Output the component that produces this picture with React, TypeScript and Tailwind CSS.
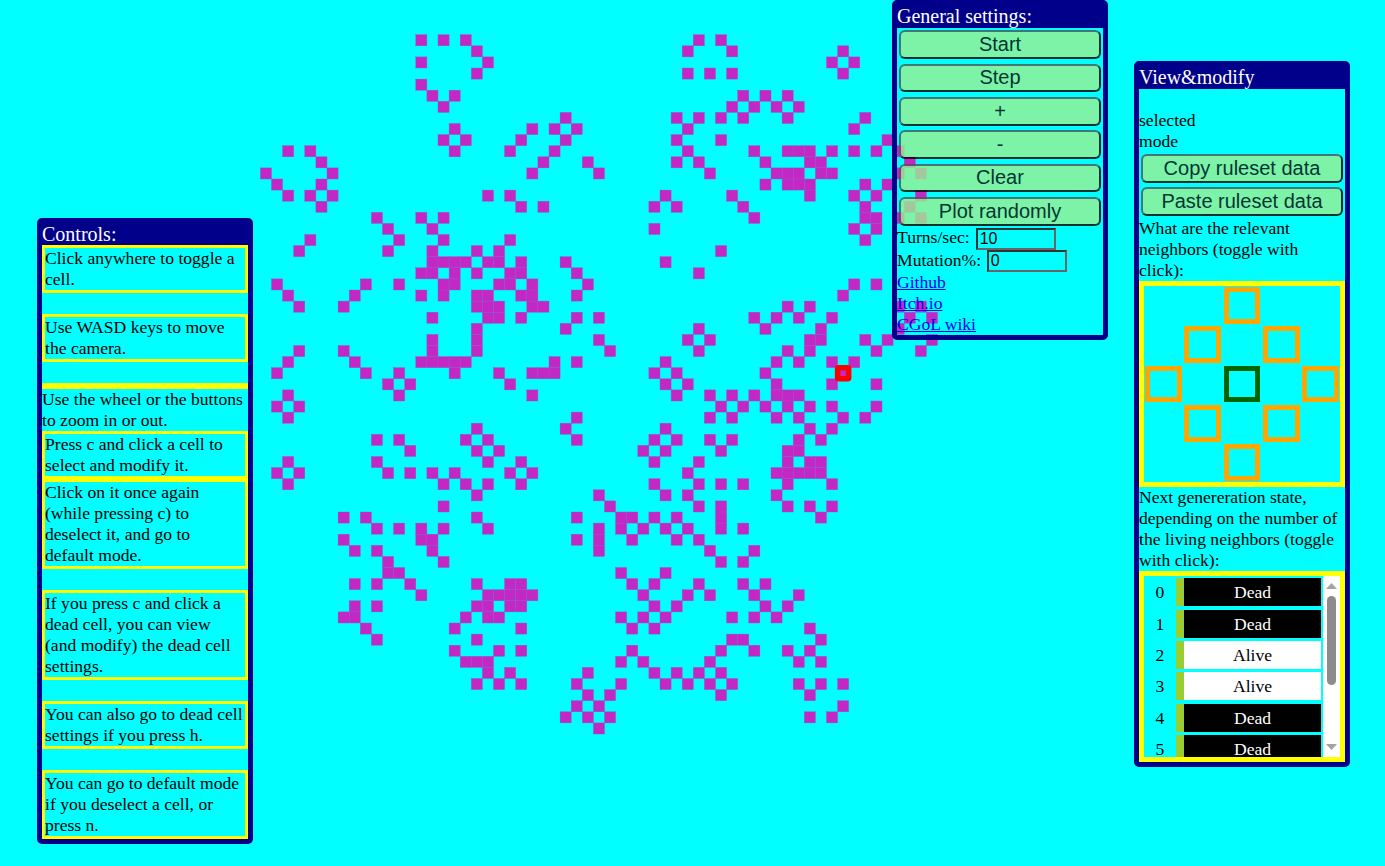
// Game of life page: canvas of cells with three floating panels
const CELL_ROWS: [number, number[]][] = [
  [0, [14, 16, 18, 39, 41]],
  [1, [19, 38, 42, 52]],
  [2, [14, 20, 51, 53]],
  [3, [19, 38, 40, 42, 52]],
  [4, [14]],
  [5, [15, 17, 43, 45, 47]],
  [6, [16, 42, 44, 46, 48]],
  [7, [27, 37, 39, 41, 43, 47, 54]],
  [8, [17, 24, 26, 28, 38, 53]],
  [9, [16, 18, 23, 27, 37, 41, 56]],
  [10, [2, 4, 17, 22, 26, 38, 44, 47, 48, 49, 51, 53, 55, 57]],
  [11, [5, 25, 29, 37, 39, 45, 49, 50, 58]],
  [12, [0, 6, 24, 30, 40, 46, 47, 48, 50, 51, 57, 59]],
  [13, [1, 5, 45, 47, 48, 49, 54, 56]],
  [14, [2, 4, 6, 20, 22, 36, 42, 49, 53, 55, 59]],
  [15, [5, 23, 25, 35, 37, 43, 54, 58]],
  [16, [10, 14, 16, 44, 54, 55, 57, 59]],
  [17, [11, 15, 35, 53, 55]],
  [18, [4, 12, 16, 22, 54]],
  [19, [3, 11, 15, 19, 21, 41]],
  [20, [15, 16, 17, 18, 20, 21, 23, 27, 36]],
  [21, [14, 15, 17, 19, 22, 23, 28, 39]],
  [22, [1, 9, 12, 16, 17, 21, 22, 24, 29, 53, 55]],
  [23, [2, 8, 14, 16, 19, 20, 23, 24, 28, 52]],
  [24, [3, 7, 19, 20, 21, 24, 25, 47, 49, 57, 59]],
  [25, [15, 20, 21, 23, 28, 30, 44, 46, 48, 51, 58, 60]],
  [26, [19, 27, 39, 45, 50, 57]],
  [27, [15, 19, 30, 38, 40, 49, 50, 54, 56, 60]],
  [28, [3, 7, 15, 19, 31, 39, 47, 49, 55, 59]],
  [29, [2, 8, 14, 15, 16, 17, 18, 26, 28, 36, 46, 48, 51, 53]],
  [30, [1, 9, 12, 17, 21, 24, 25, 26, 35, 37, 45]],
  [31, [11, 13, 22, 36, 38, 46, 51, 55]],
  [32, [2, 12, 24, 37, 40, 42, 44, 46, 47, 48]],
  [33, [1, 3, 41, 43, 45, 47, 49, 51, 55]],
  [34, [2, 28, 40, 42, 46, 48, 52, 54]],
  [35, [19, 27, 36, 49, 51]],
  [36, [10, 12, 18, 20, 28, 35, 37, 40, 42, 48, 50]],
  [37, [13, 19, 21, 34, 36, 41, 47, 48]],
  [38, [2, 10, 20, 23, 35, 39, 47, 49, 50]],
  [39, [1, 3, 11, 13, 15, 17, 22, 24, 38, 46, 47, 48, 49, 50]],
  [40, [2, 16, 18, 20, 23, 35, 39, 41, 43, 47, 51]],
  [41, [19, 30, 36, 38, 46]],
  [42, [16, 31, 39, 41, 47, 49, 51]],
  [43, [7, 9, 19, 28, 32, 33, 35, 37, 41, 50]],
  [44, [10, 12, 14, 16, 20, 30, 32, 34, 36, 38, 41, 43]],
  [45, [7, 14, 15, 28, 30, 33, 37, 39]],
  [46, [8, 10, 15, 30, 40, 44]],
  [47, [11, 16, 41, 43]],
  [48, [11, 12, 32, 36]],
  [49, [8, 10, 13, 19, 22, 23, 33, 35, 39, 43, 45]],
  [50, [14, 20, 21, 22, 23, 24, 34, 38, 40, 44, 48]],
  [51, [8, 10, 19, 20, 22, 23, 35, 37, 45, 47]],
  [52, [7, 8, 18, 20, 21, 32, 34, 36, 42, 44, 46]],
  [53, [9, 17, 23, 33, 35, 49]],
  [54, [10, 19, 42, 43, 50]],
  [55, [17, 21, 23, 33, 41, 44, 47, 49]],
  [56, [18, 19, 20, 32, 34, 40, 48, 50]],
  [57, [20, 22, 29, 35, 37, 39, 41]],
  [58, [19, 21, 23, 28, 32, 36, 38, 40, 42, 48, 50, 52]],
  [59, [29, 31, 41, 49]],
  [60, [28, 30, 52]],
  [61, [27, 29, 31, 49, 51]],
  [62, [30]],
];

const PITCH = 11.1;
const X0 = 260.4;
const Y0 = 34.7;

function Board() {
  return (
    <svg className="absolute inset-0" width={1385} height={866}>
      {CELL_ROWS.flatMap(([row, cols]) =>
        cols.map((col) => (
          <rect key={`${row}-${col}`} x={X0 + col * PITCH} y={Y0 + row * PITCH} width={PITCH} height={PITCH}
            fill="#c428c4" stroke="#9a50d0" strokeWidth={0.4} />
        ))
      )}
      <rect x={X0 + 52 * PITCH} y={Y0 + 30 * PITCH} width={PITCH} height={PITCH} rx={1}
        fill="#c428c4" stroke="#ff0000" strokeWidth={5.5} />
    </svg>
  );
}

function Panel({ title, className, children }: { title: string; className: string; children: React.ReactNode }) {
  return (
    <div className={`absolute border-[5px] border-[#00008b] rounded-[5px] ${className}`}>
      <div className="bg-[#00008b] text-white text-[20px] leading-[23px] h-[23px]">{title}</div>
      {children}
    </div>
  );
}

function Btn({ children }: { children: React.ReactNode }) {
  return (
    <button className="block w-[calc(100%-4px)] mx-[2px] h-[28.67px] pb-[1px] rounded-[6px] border-2 [border-style:outset] border-black bg-[#9cf192] opacity-80 text-black text-[20px] leading-none font-['Liberation_Sans',sans-serif]">
      {children}
    </button>
  );
}

function Note({ children, gap }: { children: React.ReactNode; gap?: boolean }) {
  return (
    <>
      <div className="border-[3px] border-[#ffff00]">{children}</div>
      {gap && <div className="h-[21px]" />}
    </>
  );
}

// o = orange neighbor, g = the cell itself
const NEIGHBORS = '..o.. .o.o. o.g.o .o.o. ..o..'.replace(/ /g, '').split('');

function NeighborGrid() {
  return (
    <div className="border-[5px] border-[#ffff00] h-[206px] grid grid-cols-5 grid-rows-5">
      {NEIGHBORS.map((c, i) => (
        <div key={i} className="p-[1.2px]">
          {c !== '.' && <div className={`h-full border-[5px] ${c === 'g' ? 'border-[#006400]' : 'border-[#ffa500]'}`} />}
        </div>
      ))}
    </div>
  );
}

const STATES = ['Dead', 'Dead', 'Alive', 'Alive', 'Dead', 'Dead'];

function StateRow({ n, state }: { n: number; state: string }) {
  const dead = state === 'Dead';
  return (
    <div className="flex h-[28px] mb-[3.4px] shrink-0">
      <div className="w-[32px] text-center leading-[28px]">{n}</div>
      <div className="w-[8px] bg-[#9acd32]" />
      <div className={`w-[137px] text-center leading-[28px] ${dead ? 'bg-black text-white' : 'bg-white text-black'}`}>{state}</div>
    </div>
  );
}

function FakeScrollbar() {
  return (
    <div className="w-[17px] bg-white flex flex-col items-center shrink-0">
      <svg width="11" height="6" className="mt-[7px] shrink-0"><polygon points="5.5,0 11,6 0,6" fill="#a3a3a3" /></svg>
      <div className="w-[9px] h-[89px] mt-[7px] rounded-[5px] bg-[#8c8c8c]" />
      <div className="flex-1" />
      <svg width="11" height="6" className="mb-[7px] shrink-0"><polygon points="0,0 11,0 5.5,6" fill="#a3a3a3" /></svg>
    </div>
  );
}

function Field({ label, labelClass, value }: { label: string; labelClass: string; value: string }) {
  return (
    <div className="flex items-center h-[22px]">
      <span className={labelClass}>{label}</span>
      <input readOnly value={value} className="w-[80px] h-[22px] px-[2px] border-2 border-t-[#333] border-l-[#333] border-b-[#666] border-r-[#666] bg-transparent text-[16px] font-['Liberation_Sans',sans-serif] outline-none" />
    </div>
  );
}

export default function App() {
  return (
    <div className="relative w-[1385px] h-[866px] overflow-hidden bg-[#00ffff] text-black text-[17.6px] leading-[21px] font-['Liberation_Serif',serif]">
      <Board />

      <Panel title="Controls:" className="left-[37px] top-[218px] w-[216px] h-[626px]">
        <div className="-mt-[1px]">
          <Note gap>Click anywhere to toggle a cell.</Note>
          <Note gap>Use WASD keys to move the camera.</Note>
          <div className="border-[3px] border-[#ffff00]" />
          <div>Use the wheel or the buttons to zoom in or out.</div>
          <Note>Press c and click a cell to select and modify it.</Note>
          <Note gap>Click on it once again (while pressing c) to deselect it, and go to<br />default mode.</Note>
          <Note gap>If you press c and click a dead cell, you can view (and modify) the dead cell settings.</Note>
          <Note gap>You can also go to dead cell settings if you press h.</Note>
          <Note>You can go to default mode if you deselect a cell, or press n.</Note>
        </div>
      </Panel>

      <Panel title="General settings:" className="left-[892px] top-0 w-[216px] h-[340px]">
        <div className="flex flex-col gap-[4.66px] pt-[2.3px] pb-[2.3px]">
          <Btn>Start</Btn>
          <Btn>Step</Btn>
          <Btn>+</Btn>
          <Btn>-</Btn>
          <Btn>Clear</Btn>
          <Btn>Plot randomly</Btn>
        </div>
        <Field label="Turns/sec:" labelClass="w-[78.7px] -mt-[2px]" value="10" />
        <Field label="Mutation%:" labelClass="w-[89.7px]" value="0" />
        <a href="#" className="block text-[#0000ee] underline">Github</a>
        <a href="#" className="block text-[#0000ee] underline">Itch.io</a>
        <a href="#" className="block text-[#0000ee] underline">CGoL wiki</a>
      </Panel>

      <Panel title="View&modify" className="left-[1134px] top-[61px] w-[216px] h-[706px]">
        <div className="h-[21px]" />
        <div className="w-[60px]">selected mode</div>
        <div className="flex flex-col gap-[4.33px] pt-[2.33px] pb-[2px]">
          <Btn>Copy ruleset data</Btn>
          <Btn>Paste ruleset data</Btn>
        </div>
        <div>What are the relevant neighbors (toggle with click):</div>
        <NeighborGrid />
        <div>Next genereration state, depending on the number of the living neighbors (toggle with click):</div>
        <div className="border-[5px] border-[#ffff00] h-[191px] flex">
          <div className="flex-1 overflow-hidden pt-[2.3px]">
            {STATES.map((s, i) => (
              <StateRow key={i} n={i} state={s} />
            ))}
          </div>
          <FakeScrollbar />
        </div>
      </Panel>
    </div>
  );
}
